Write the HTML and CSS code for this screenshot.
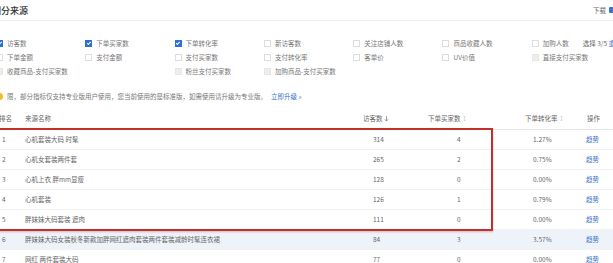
FILE: index.html
```html
<!DOCTYPE html>
<html lang="zh-CN">
<head>
	<meta charset="UTF-8">
	<title>细分来源</title>
	<link rel="stylesheet" href="styles.css">
</head>
<body>
	<div class="page">
		<div class="head">
			<h2 class="title">细分来源</h2>
			<a class="download">下载 <span class="dl-icon"></span></a>
		</div>

		<div class="options">
			<label class="opt"><i class="cb on"></i>访客数</label>
			<label class="opt"><i class="cb on"></i>下单买家数</label>
			<label class="opt"><i class="cb on"></i>下单转化率</label>
			<label class="opt"><i class="cb"></i>新访客数</label>
			<label class="opt"><i class="cb"></i>关注店铺人数</label>
			<label class="opt"><i class="cb"></i>商品收藏人数</label>
			<div class="last">
				<label class="opt"><i class="cb"></i>加购人数</label>
				<span class="pick">选择 3/5 <a class="link">重置</a></span>
			</div>

			<label class="opt"><i class="cb"></i>下单金额</label>
			<label class="opt"><i class="cb"></i>支付金额</label>
			<label class="opt"><i class="cb"></i>支付买家数</label>
			<label class="opt"><i class="cb"></i>支付转化率</label>
			<label class="opt"><i class="cb"></i>客单价</label>
			<label class="opt"><i class="cb"></i>UV价值</label>
			<label class="opt"><i class="cb off"></i>直接支付买家数</label>

			<label class="opt"><i class="cb off"></i>收藏商品-支付买家数</label>
			<span></span>
			<label class="opt"><i class="cb off"></i>粉丝支付买家数</label>
			<label class="opt"><i class="cb off"></i>加购商品-支付买家数</label>
		</div>

		<p class="notice"><i class="warn">!</i>限，部分指标仅支持专业版用户使用，您当前使用的是标准版，如需使用请升级为专业版。<a class="link">立即升级 »</a></p>

		<div class="table">
			<div class="row th">
				<span class="c-rank">排名</span>
				<span class="c-name">来源名称</span>
				<span class="c-uv">访客数 <svg class="sort" viewBox="0 0 6 8"><path d="M3 1v6M1 5l2 2 2-2" fill="none" stroke="#666" stroke-width="0.8"/></svg></span>
				<span class="c-buy">下单买家数 <svg class="sort" viewBox="0 0 6 8"><path d="M3 1v6M1.5 2.5L3 1l1.5 1.5M1.5 5.5L3 7l1.5-1.5" fill="none" stroke="#ccc" stroke-width="0.7"/></svg></span>
				<span class="c-rate">下单转化率 <svg class="sort" viewBox="0 0 6 8"><path d="M3 1v6M1.5 2.5L3 1l1.5 1.5M1.5 5.5L3 7l1.5-1.5" fill="none" stroke="#ccc" stroke-width="0.7"/></svg></span>
				<span class="c-op">操作</span>
			</div>
			<div class="row"><span class="c-rank">1</span><span class="c-name">心机套装大码 时髦</span><span class="c-uv">314</span><span class="c-buy">4</span><span class="c-rate">1.27%</span><a class="c-op link">趋势</a></div>
			<div class="row"><span class="c-rank">2</span><span class="c-name">心机女套装两件套</span><span class="c-uv">265</span><span class="c-buy">2</span><span class="c-rate">0.75%</span><a class="c-op link">趋势</a></div>
			<div class="row"><span class="c-rank">3</span><span class="c-name">心机上衣 胖mm显瘦</span><span class="c-uv">128</span><span class="c-buy">0</span><span class="c-rate">0.00%</span><a class="c-op link">趋势</a></div>
			<div class="row"><span class="c-rank">4</span><span class="c-name">心机套装</span><span class="c-uv">126</span><span class="c-buy">1</span><span class="c-rate">0.79%</span><a class="c-op link">趋势</a></div>
			<div class="row"><span class="c-rank">5</span><span class="c-name">胖妹妹大码套装 遮肉</span><span class="c-uv">111</span><span class="c-buy">0</span><span class="c-rate">0.00%</span><a class="c-op link">趋势</a></div>
			<div class="row hover"><span class="c-rank">6</span><span class="c-name">胖妹妹大码女装秋冬新款加胖网红遮肉套装两件套装减龄时髦连衣裙</span><span class="c-uv">84</span><span class="c-buy">3</span><span class="c-rate">3.57%</span><a class="c-op link">趋势</a></div>
			<div class="row"><span class="c-rank">7</span><span class="c-name">网红 两件套装大码</span><span class="c-uv">77</span><span class="c-buy">0</span><span class="c-rate">0.00%</span><a class="c-op link">趋势</a></div>

			<div class="mark"></div>
		</div>
	</div>
</body>
</html>
```

FILE: styles.css
```css
html,body{margin:0;padding:0;background:#fff;overflow:hidden;}
body{font-family:"Noto Sans CJK SC","Noto Sans",sans-serif;font-size:6.5px;color:#666;line-height:1;}
.page{margin-left:-4px;width:621px;}
.link{color:#3b73c9;text-decoration:none;}

.head{display:flex;justify-content:space-between;align-items:center;height:20px;border-bottom:1px solid #eee;}
.title{margin:0 0 0 -4px;font-size:9px;font-weight:500;color:#333;}
.download{display:flex;align-items:center;gap:3px;padding-right:2px;color:#666;}
.dl-icon{width:6px;height:6px;border-radius:1px;background:#3b73c9;}

.options{display:grid;grid-template-columns:repeat(6,89.3px) auto;grid-auto-rows:14px;align-items:center;margin-top:15px;color:#777;}
.opt{display:flex;align-items:center;gap:4px;white-space:nowrap;}
.last{display:flex;align-items:center;gap:14px;}
.cb{width:5px;height:5px;border:1px solid #ddd;background:#fff;flex:none;position:relative;}
.cb.on{background:#2d6fd4;border-color:#2d6fd4;}
.cb.on::after{content:"";position:absolute;left:1.5px;top:0;width:1.4px;height:3px;border:solid #fff;border-width:0 0.9px 0.9px 0;transform:rotate(45deg);}
.cb.off{background:#eee;border-color:#e6e6e6;}
.pick{white-space:nowrap;color:#666;}

.notice{display:flex;align-items:center;height:14px;margin:11px 0 0;white-space:nowrap;color:#777;}
.notice .link{margin-left:4px;}
.warn{width:7px;height:7px;border-radius:50%;background:#f5b92d;color:#fff;font-style:normal;font-size:5px;font-weight:bold;display:flex;align-items:center;justify-content:center;margin-right:4px;}

.table{position:relative;margin-top:5px;}
.row{display:grid;grid-template-columns:29px 335px 65px 95px 60px 37px;align-items:center;height:20px;border-bottom:1px solid #f2f2f2;box-sizing:border-box;white-space:nowrap;}
.row.th{height:22px;border-bottom-color:#e6e6e6;}
.row.hover{background:#eef3fa;}
.c-rank{padding-left:6px;}
.th .c-rank{padding-left:3px;}
.c-uv{padding-left:13px;}
.th .c-uv{padding-left:3px;}
.c-buy{padding-left:32px;}
.th .c-buy{padding-left:3px;}
.c-rate{padding-left:13px;}
.th .c-rate{padding-left:5px;}
.c-op{padding-left:6px;}
.th .c-op{padding-left:7px;}
.sort{width:5px;height:7px;vertical-align:middle;}

.mark{position:absolute;left:-2px;top:20px;width:495px;height:99px;border:2px solid #c1302b;box-shadow:0 1px 2px rgba(120,0,0,.25);}
```
